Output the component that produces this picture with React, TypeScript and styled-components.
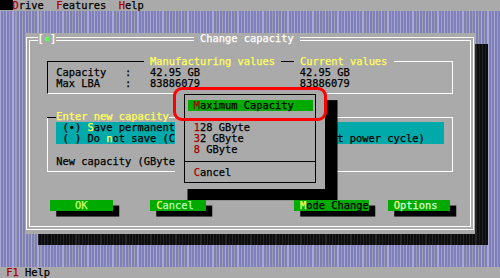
import React from "react";
import styled, { createGlobalStyle, css } from "styled-components";

const CW = 6.25;
const RH = 11.12;

const GlobalStyle = createGlobalStyle`
  html, body { margin: 0; padding: 0; background: #aaaaaa; }
  body { width: 500px; height: 278px; overflow: hidden; }
`;

type Place = { $c: number; $r: number; $w: number; $h?: number };
const place = css<Place>`
  grid-column: ${(p) => p.$c + 1} / span ${(p) => p.$w};
  grid-row: ${(p) => p.$r + 1} / span ${(p) => p.$h ?? 1};
  position: relative;
  z-index: 0;
`;

const Screen = styled.div`
  width: 500px;
  height: 278px;
  display: flex;
  flex-direction: column;
  font-family: "DejaVu Sans Mono", "Liberation Mono", monospace;
  font-size: 10.38px;
  line-height: ${RH}px;
  color: #000;
  white-space: pre;
  background: #aaaaaa;
  -webkit-text-stroke: 0.25px currentColor;
`;

const MenuBar = styled.div`
  height: ${RH}px;
  flex: 0 0 ${RH}px;
  display: flex;
  align-items: flex-start;
  background: #aaaaaa;
`;

const SysBlock = styled.div`
  width: ${2 * CW}px;
  height: 10px;
  background: #000;
`;

const MenuEntry = styled.span`
  margin-right: ${2 * CW}px;
`;

const Hot = styled.span<{ $fg?: string }>`
  color: ${(p) => p.$fg ?? "#aa0000"};
`;

/* part of a line that lies under the popup and is not painted */
const Occluded = styled.span`
  visibility: hidden;
`;

const Desktop = styled.div`
  flex: 1 1 auto;
  position: relative;
  background: repeating-linear-gradient(
    90deg,
    #a9a9d4 0px,
    #a9a9d4 1px,
    #7f7fba 1px,
    #7f7fba 3px,
    #9d9db2 3px,
    #9d9db2 4px,
    #8080bb 4px,
    #8080bb 6.25px
  );
`;

const StatusBar = styled.div`
  height: ${RH}px;
  flex: 0 0 ${RH}px;
  padding-left: ${CW}px;
  background: #aaaaaa;
`;

const Window = styled.div`
  position: absolute;
  left: ${4 * CW}px;
  top: ${2 * RH}px;
  display: grid;
`;

const WindowShadow = styled.div`
  grid-area: 1 / 1;
  margin: ${RH}px 0 0 ${2 * CW}px;
  width: ${72 * CW}px;
  height: ${18 * RH}px;
  background: repeating-linear-gradient(
    90deg,
    #262626 0px,
    #262626 1px,
    #0d0d0d 1px,
    #0d0d0d 3px,
    #1e1e1e 3px,
    #1e1e1e 4px,
    #0d0d0d 4px,
    #0d0d0d 6.25px
  );
`;

const Dialog = styled.div`
  grid-area: 1 / 1;
  position: relative;
  z-index: 0;
  width: ${72 * CW}px;
  height: ${18 * RH}px;
  background: #aaaaaa;
  display: grid;
  grid-template-columns: repeat(72, ${CW}px);
  grid-template-rows: repeat(18, ${RH}px);
  &::before {
    content: "";
    position: absolute;
    left: ${CW / 2 - 2}px;
    right: ${CW / 2 - 2}px;
    top: ${RH / 2 - 2}px;
    bottom: ${RH / 2 - 2}px;
    border: 4px double #ffffff;
    z-index: -1;
  }
`;

const CloseBox = styled.div<Place>`
  ${place};
  display: flex;
  color: #ffffff;
  background: #aaaaaa;
`;

const CloseMark = styled.span`
  width: ${CW}px;
  height: ${RH}px;
  display: flex;
  align-items: center;
  justify-content: center;
  &::after {
    content: "";
    width: 4px;
    height: 4px;
    background: #55ff55;
  }
`;

const Title = styled.div<Place>`
  ${place};
  color: #ffffff;
  background: #aaaaaa;
`;

const Box = styled.div<Place & { $left: string }>`
  ${place};
  display: flex;
  flex-direction: column;
  &::before {
    content: "";
    position: absolute;
    left: ${CW / 2}px;
    right: ${CW / 2}px;
    top: ${RH / 2}px;
    bottom: ${RH / 2}px;
    border-left: 1px solid ${(p) => p.$left};
    border-right: 1px solid #ffffff;
    border-bottom: 1px solid #ffffff;
    z-index: -1;
  }
`;

const BoxHead = styled.div`
  display: flex;
  height: ${RH}px;
  padding: 0 ${CW / 2}px;
`;

const Rule = styled.div<{ $color: string; $w?: number }>`
  flex: ${(p) => (p.$w ? `0 0 ${p.$w}px` : "1 1 0")};
  height: ${RH}px;
  background: linear-gradient(${(p) => p.$color}, ${(p) => p.$color}) 0
    ${RH / 2}px / 100% 1px no-repeat;
`;

const HeadText = styled.span`
  color: #ffff55;
`;

const BoxLine = styled.div`
  height: ${RH}px;
  padding-left: ${2 * CW}px;
`;

const RadioGroup = styled.div`
  margin-left: ${2 * CW}px;
  width: ${62 * CW}px;
  background: #00aaaa;
`;

const RadioLine = styled.div`
  height: ${RH}px;
  overflow: hidden;
`;

const Popup = styled.div<Place>`
  ${place};
  background: #aaaaaa;
  box-shadow: ${2 * CW}px ${RH}px 0 #000000;
  display: flex;
  flex-direction: column;
  padding-top: ${RH}px;
  &::before {
    content: "";
    position: absolute;
    left: ${CW * 1.5}px;
    right: ${CW * 1.5}px;
    top: ${RH / 2}px;
    bottom: ${RH / 2}px;
    border: 1px solid #000000;
    z-index: -1;
  }
`;

const MenuItem = styled.div<{ $active?: boolean }>`
  height: ${RH}px;
  margin: 0 ${2 * CW}px;
  padding-left: ${CW}px;
  background: ${(p) => (p.$active ? "#00aa00" : "transparent")};
`;

const MenuSep = styled.div`
  height: ${RH}px;
  margin: 0 ${CW * 1.5}px;
  background: linear-gradient(#000, #000) 0 ${RH / 2}px / 100% 1px no-repeat;
`;

const Button = styled.div<Place & { $fg: string }>`
  ${place};
  background: #00aa00;
  color: ${(p) => p.$fg};
  box-shadow: ${CW}px ${RH / 2}px 0 #000000;
`;

const Highlight = styled.div`
  position: absolute;
  left: 148px;
  top: 54px;
  width: 154px;
  height: 34px;
  box-sizing: border-box;
  border: 3.5px solid #ff0000;
  border-radius: 9px;
  z-index: 2;
`;

export default function App() {
  return (
    <>
      <GlobalStyle />
      <Screen>
        <MenuBar>
          <SysBlock />
          <MenuEntry>
            <Hot>D</Hot>rive
          </MenuEntry>
          <MenuEntry>
            <Hot>F</Hot>eatures
          </MenuEntry>
          <MenuEntry>
            <Hot>H</Hot>elp
          </MenuEntry>
        </MenuBar>
        <Desktop>
          <Window>
            <WindowShadow />
            <Dialog>
              <CloseBox $c={2} $r={0} $w={3}>
                [<CloseMark />]
              </CloseBox>
              <Title $c={27} $r={0} $w={17}>
                {" Change capacity "}
              </Title>

              <Box $c={3} $r={2} $w={66} $h={4} $left="#000000">
                <BoxHead>
                  <Rule $color="#000000" $w={16 * CW - CW / 2} />
                  <HeadText>{" Manufacturing values "}</HeadText>
                  <Rule $color="#000000" $w={2 * CW} />
                  <HeadText>{" Current values "}</HeadText>
                  <Rule $color="#ffffff" />
                </BoxHead>
                <BoxLine>{"Capacity   :   42.95 GB                42.95 GB"}</BoxLine>
                <BoxLine>{"Max LBA    :   83886079                83886079"}</BoxLine>
              </Box>

              <Box $c={3} $r={7} $w={66} $h={6} $left="#ffffff">
                <BoxHead>
                  <Rule $color="#000000" $w={2 * CW - CW / 2} />
                  <HeadText>Enter new capacity</HeadText>
                  <Rule $color="#ffffff" />
                </BoxHead>
                <RadioGroup>
                  <RadioLine>
                    {" (•) "}
                    <Hot $fg="#ffff55">S</Hot>
                    {"ave permanent"}
                    <Occluded>ly</Occluded>
                  </RadioLine>
                  <RadioLine>
                    {" ( ) Do "}
                    <Hot $fg="#ffff55">n</Hot>
                    {"ot save (C"}
                    <Occluded>{"hanges will be lost at n"}</Occluded>
                    {"ext power cycle)"}
                  </RadioLine>
                </RadioGroup>
                <BoxLine />
                <BoxLine>
                  {"New capacity (GByte"}
                  <Occluded>{") :"}</Occluded>
                </BoxLine>
              </Box>

              <Popup $c={24} $r={5} $w={24} $h={9}>
                <MenuItem $active>
                  <Hot>M</Hot>aximum Capacity
                </MenuItem>
                <MenuItem />
                <MenuItem>
                  <Hot>1</Hot>28 GByte
                </MenuItem>
                <MenuItem>
                  <Hot>3</Hot>2 GByte
                </MenuItem>
                <MenuItem>
                  <Hot>8</Hot> GByte
                </MenuItem>
                <MenuSep />
                <MenuItem>
                  <Hot>C</Hot>ancel
                </MenuItem>
              </Popup>

              <Button $c={4} $r={15} $w={10} $fg="#ccff77">
                {"    OK"}
              </Button>
              <Button $c={20} $r={15} $w={9} $fg="#b8ffb8">
                {" "}
                <Hot $fg="#ffff55">C</Hot>
                {"ancel"}
              </Button>
              <Button $c={43} $r={15} $w={12} $fg="#000000">
                {" "}
                <Hot $fg="#ffff55">M</Hot>
                {"ode Change"}
              </Button>
              <Button $c={58} $r={15} $w={10} $fg="#d8ffd8">
                {" "}
                <Hot $fg="#ffff88">O</Hot>
                {"ptions"}
              </Button>

              <Highlight />
            </Dialog>
          </Window>
        </Desktop>
        <StatusBar>
          <Hot>F1</Hot> Help
        </StatusBar>
      </Screen>
    </>
  );
}
